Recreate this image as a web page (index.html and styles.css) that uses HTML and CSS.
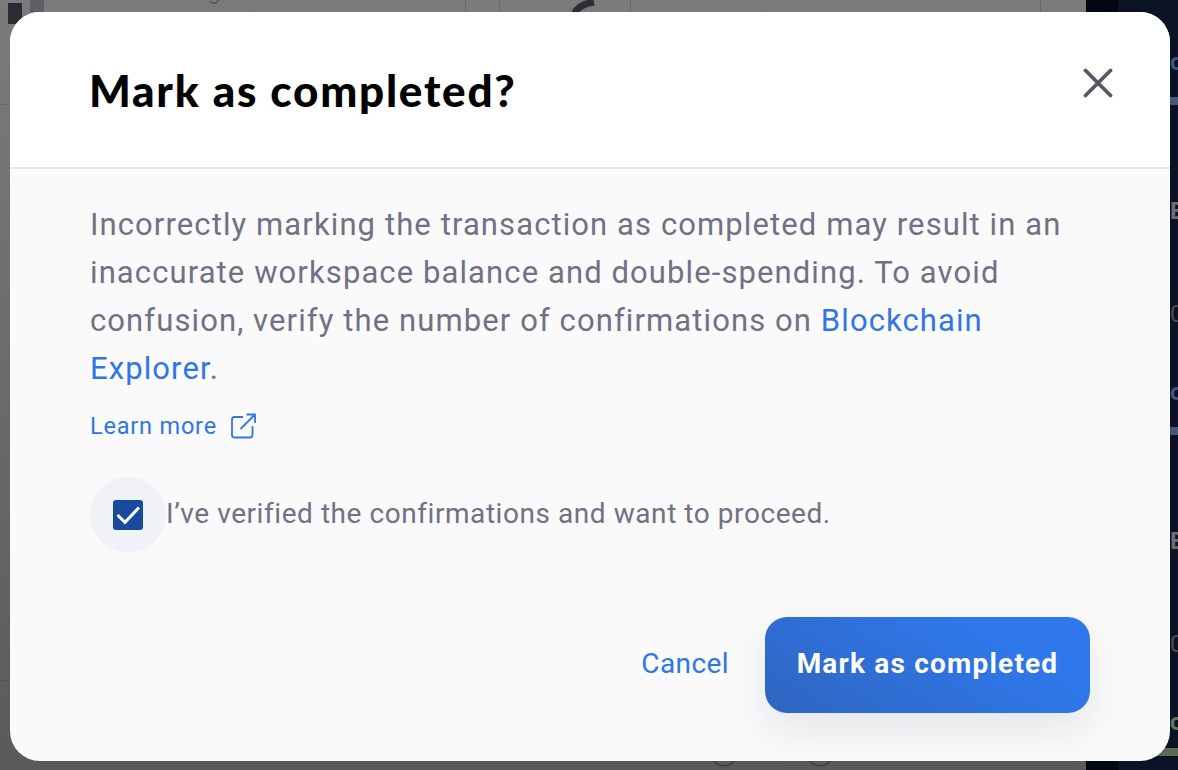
FILE: index.html
```html
<!DOCTYPE html>
<html lang="en">
<head>
<meta charset="utf-8">
<title>Mark as completed?</title>
<link rel="stylesheet" href="styles.css">
</head>
<body>
<div class="app">
  <main class="main">
    <div class="topstrip">
      <span class="chip"></span>
      <span class="chip chip-light"></span>
      <span class="fragment">Exchanges</span>
      <span class="divider d1"></span>
      <span class="divider d2"></span>
      <svg class="curl" viewBox="0 0 26 12" width="26" height="12"><path d="M3 13C5 8 10 4 22 2" fill="none" stroke="#2e2e35" stroke-width="7"/></svg>
      <span class="divider d3"></span>
      <span class="divider d4"></span>
    </div>
    <div class="bottomstrip">
      <span class="ring"></span>
      <span class="ring"></span>
    </div>
  </main>
  <aside class="side">
    <div class="side-row o">o</div>
    <div class="side-bar"></div>
    <div class="side-row e">E</div>
    <div class="side-row zero">0</div>
    <div class="side-row o">o</div>
    <div class="side-bar"></div>
    <div class="side-row e">E</div>
    <div class="side-row zero">0</div>
    <div class="side-row o green">o</div>
    <div class="side-green"></div>
  </aside>
</div>

<section class="modal">
  <header class="modal-head">
    <h1 class="modal-title">Mark as completed?</h1>
    <button class="close" aria-label="Close">
      <svg viewBox="0 0 30 30" width="30" height="30"><path d="M2.500 2.500 27.500 27.500M27.500 2.500 2.500 27.500" fill="none" stroke="#565665" stroke-width="3.800" stroke-linecap="round"/></svg>
    </button>
  </header>
  <div class="modal-body">
    <p class="lead">Incorrectly marking the transaction as completed may result in an inaccurate workspace balance and double-spending. To avoid confusion, verify the number of confirmations on <a class="link">Blockchain Explorer</a>.</p>
    <a class="learn">Learn more
      <svg viewBox="0 0 26 26" width="26" height="26"><path d="M13 4H4.500A2.500 2.500 0 0 0 2 6.500V22a2.500 2.500 0 0 0 2.500 2.500H20A2.500 2.500 0 0 0 22.500 22V13M10.500 16 24.500 2M16.500 1.500H25V10" fill="none" stroke="#2f76e8" stroke-width="1.800"/></svg>
    </a>
    <label class="check">
      <span class="halo">
        <span class="box">
          <svg viewBox="0 0 30 30" width="30" height="30"><path d="M4.500 15 12 22.300 26 7.500" fill="none" stroke="#fff" stroke-width="3"/></svg>
        </span>
      </span>
      <span class="check-text">I’ve verified the confirmations and want to proceed.</span>
    </label>
    <div class="actions">
      <a class="cancel">Cancel</a>
      <button class="primary">Mark as completed</button>
    </div>
  </div>
</section>
</body>
</html>
```
FILE: styles.css
```css
* { box-sizing: border-box; }
html, body { margin: 0; height: 100%; }
body { position: relative; width: 1178px; height: 770px; overflow: hidden; font-family: Roboto, "Liberation Sans", sans-serif; background: #5c5c5c; }

.app { display: flex; height: 770px; }
.main { flex: 1; display: flex; flex-direction: column; justify-content: space-between; background:
  linear-gradient(transparent 104px, rgba(0,0,0,.1) 104px, rgba(0,0,0,.1) 105px, transparent 105px),
  linear-gradient(transparent 680px, rgba(0,0,0,.08) 680px, rgba(0,0,0,.08) 681px, transparent 681px),
  linear-gradient(#7b7b7b, #5a5a5a); }
.topstrip { display: flex; align-items: flex-start; height: 30px; padding-left: 8px; }
.chip { width: 14px; height: 21px; margin-top: 3px; background: #2c2c34; }
.chip-light { height: 12px; margin: 0 0 0 8px; background: #5f5f68; }
.fragment { margin: -24px 0 0 86px; font-size: 24px; line-height: 30px; color: #5d5d5d; }
.divider { width: 1px; height: 12px; background: #6a6a6a; }
.d1 { margin-left: 219px; }
.d2 { margin-left: 33px; }
.curl { margin-left: 72px; flex: none; }
.d3 { margin-left: 32px; }
.d4 { margin-left: 409px; }
.bottomstrip { display: flex; gap: 66px; height: 9px; overflow: hidden; padding-left: 709px; }
.ring { width: 30px; height: 30px; margin-top: -24px; border: 2px solid #454545; border-radius: 50%; flex: none; }

.side { width: 92px; background: linear-gradient(90deg, #030714 32px, #0b1226 32px); display: flex; flex-direction: column; align-items: flex-start; padding: 52px 0 0 84px; overflow: hidden; font-size: 24px; line-height: 24px; }
.side-row { height: 24px; }
.o { color: #3d5580; font-weight: 700; margin-top: -2px; }
.side-bar { width: 8px; height: 8px; background: #46587a; margin: 23px 0 94px; }
.e { color: #6c6c70; font-weight: 700; margin-bottom: 79px; }
.zero { color: #4c4c52; margin-bottom: 56px; }
.green { color: #5a7a60; }
.side-green { width: 40px; height: 8px; margin: 14px 0 0 -30px; background: #5a6b50; flex: none; }

.modal { position: absolute; left: 10px; top: 12px; width: 1160px; height: 749px; border-radius: 30px; background: #fafafa; overflow: hidden; display: flex; flex-direction: column; }
.modal-head { height: 157px; flex: none; background: #fff; border-bottom: 2px solid #e7e7ee; display: flex; justify-content: space-between; padding: 51px 57px 0 79px; }
.modal-title { margin: 0; font-family: Lato, sans-serif; font-weight: 900; font-size: 44px; line-height: 54px; letter-spacing: 1.750px; color: #000; }
.close { border: 0; background: none; padding: 0; margin-top: 5px; width: 30px; height: 30px; }
.close svg { display: block; }

.modal-body { flex: 1; padding: 32px 80px 48px; display: flex; flex-direction: column; align-items: flex-start; }
.lead { margin: 0; font-size: 31px; line-height: 48px; color: #717186; letter-spacing: 1.100px; }
.link { color: #2f76e8; }
.learn { display: flex; align-items: center; gap: 13px; margin-top: 18px; font-size: 23.500px; line-height: 30px; color: #2f76e8; letter-spacing: .8px; }
.learn svg { display: block; }
.check { display: flex; align-items: center; margin-top: 36px; }
.halo { width: 76px; height: 76px; border-radius: 50%; background: #f0f2f7; display: flex; align-items: center; justify-content: center; }
.box { width: 30px; height: 30px; border-radius: 3px; background: #1a4a9e; display: block; }
.box svg { display: block; }
.check-text { font-size: 28px; color: #717186; letter-spacing: .56px; margin-top: -3px; }
.actions { align-self: flex-end; margin-top: auto; display: flex; align-items: center; gap: 36px; }
.cancel { font-size: 28px; color: #2f76e8; letter-spacing: .4px; margin-top: -4px; }
.primary { width: 325px; height: 96px; padding: 0 0 4px; border: 0; border-radius: 22px; background: linear-gradient(30deg, #2f65bf, #2f78ec 75%); color: #fff; font: 700 28px Roboto, sans-serif; letter-spacing: 1.200px; box-shadow: 0 16px 40px rgba(30, 50, 90, .1); }
```
